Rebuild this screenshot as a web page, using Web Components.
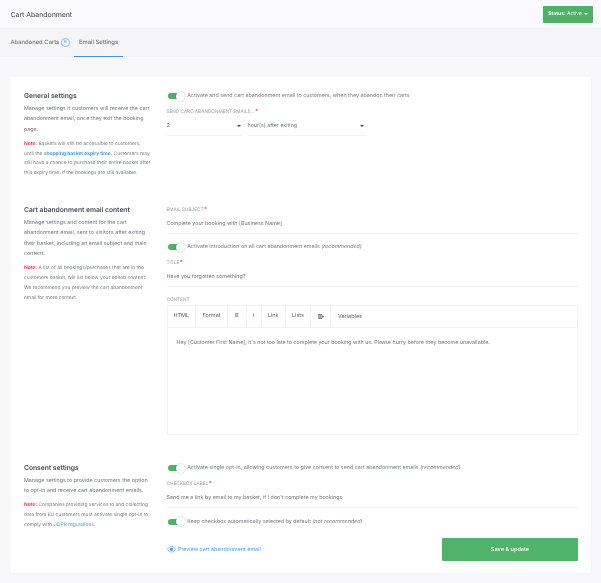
<!DOCTYPE html>
<html>
<head>
<meta charset="utf-8">
<title>Cart Abandonment</title>
<style>
    html, body { margin: 0; padding: 0; }
    html { background: #f8f8fb; }
    body {
        width: 601px;
        height: 583px;
        overflow: hidden;
        filter: blur(.3px);
        font-family: "Inter", "Open Sans", sans-serif;
        text-rendering: geometricPrecision;
        color: #6f7280;
    }
    a { color: #4a9ee8; text-decoration: none; }
    b.note { color: #ee3a57; font-weight: 700; }
    b.link { color: #2f8fe0; font-weight: 600; }
</style>
</head>
<body>
<page-header></page-header>
<page-tabs></page-tabs>
<settings-card>
    <settings-section heading="General settings" style="height:114px">
        <div slot="intro">Manage settings if customers will receive the cart<br>abandonment email, once they exit the booking<br>page.</div>
        <div slot="note"><b class="note">Note:</b> Baskets will still be accessible to customers,<br>until the <b class="link">shopping basket expiry time.</b> Customers may<br>still have a chance to purchase their entire basket after<br>this expiry time, if the bookings are still available.</div>
        <toggle-row>Activate and send cart abandonment email to customers, when they abandon their carts</toggle-row>
        <delay-select></delay-select>
    </settings-section>
    <settings-section heading="Cart abandonment email content" style="height:258px">
        <div slot="intro">Manage settings and content for the cart<br>abandonment email, sent to visitors after exiting<br>their basket, including an email subject and main<br>content.</div>
        <div slot="note"><b class="note">Note:</b> A list of all bookings/purchases that are in the<br>customers basket, will list below your edited content.<br>We recommend you preview the cart abandonment<br>email for more context.</div>
        <text-field label="EMAIL SUBJECT" required>Complete your booking with [Business Name]</text-field>
        <toggle-row style="margin-top:8.5px">Activate introduction on all cart abandonment emails <i>(recommended)</i></toggle-row>
        <text-field style="margin-top:6px" label="TITLE" required>Have you forgotten something?</text-field>
        <rich-editor>Hey [Customer First Name], it's not too late to complete your booking with us. Please hurry before they become unavailable.</rich-editor>
    </settings-section>
    <settings-section heading="Consent settings">
        <div slot="intro">Manage settings to provide customers the option<br>to opt-in and receive cart abandonment emails.</div>
        <div slot="note"><b class="note">Note:</b> Companies providing services to and collecting<br>data from EU customers must activate single opt-in to<br>comply with <a href="#">GDPR regulations</a>.</div>
        <toggle-row>Activate single opt-in, allowing customers to give consent to send cart abandonment emails <i>(recommended)</i></toggle-row>
        <text-field style="margin-top:6px" label="CHECKBOX LABEL" required>Send me a link by email to my basket, if I don't complete my bookings</text-field>
        <toggle-row style="margin-top:9px">Keep checkbox automatically selected by default <i>(not recommended)</i></toggle-row>
        <save-bar></save-bar>
    </settings-section>
</settings-card>

<script>
class PageHeader extends HTMLElement {
    constructor() {
        super();
        this.attachShadow({ mode: 'open' });
        this.shadowRoot.innerHTML = `
            <style>
                :host {
                    display: flex;
                    align-items: center;
                    justify-content: space-between;
                    height: 28px;
                    padding: 0 8px 0 10.5px;
                    background: #f9f9fb;
                    border-bottom: 1px solid #f2f2f5;
                }
                h1 { margin: 0; font-size: 6.9px; font-weight: 400; color: #3d4048; }
                .status {
                    display: flex;
                    align-items: center;
                    gap: 2px;
                    box-sizing: border-box;
                    width: 50px;
                    height: 17px;
                    justify-content: center;
                    background: #4fb168;
                    border-radius: 1px;
                    color: #fff;
                    font-size: 5px;
                }
                .status b { font-weight: 700; }
                .caret { width: 0; height: 0; border: 2.2px solid transparent; border-top: 2.4px solid #fff; border-bottom: 0; }
            </style>
            <h1>Cart Abandonment</h1>
            <div class="status"><span><b>Status:</b> Active</span><span class="caret"></span></div>
        `;
    }
}

class PageTabs extends HTMLElement {
    constructor() {
        super();
        this.attachShadow({ mode: 'open' });
        this.shadowRoot.innerHTML = `
            <style>
                :host {
                    display: flex;
                    box-sizing: border-box;
                    height: 28px;
                    padding-left: 6px;
                    background: #f5f5f7;
                    border-bottom: 1px solid #f1f1f4;
                    font-size: 5.9px;
                    color: #5c5f6a;
                }
                .tab {
                    display: flex;
                    align-items: center;
                    box-sizing: border-box;
                    height: 28px;
                    padding-bottom: 1px;
                    white-space: nowrap;
                }
                .first { width: 68px; padding-left: 4.5px; }
                .active { width: 48.5px; padding-left: 5px; border-bottom: 1.5px solid #3d92e0; }
                .count {
                    display: inline-flex;
                    align-items: center;
                    justify-content: center;
                    box-sizing: border-box;
                    width: 8.5px;
                    height: 8.5px;
                    margin-left: 2px;
                    border: .6px solid #8fc2f0;
                    border-radius: 50%;
                    color: #4a9ee8;
                    font-size: 4.4px;
                }
            </style>
            <div class="tab first">Abandoned Carts<span class="count">6</span></div>
            <div class="tab active">Email Settings</div>
        `;
    }
}

class SettingsCard extends HTMLElement {
    constructor() {
        super();
        this.attachShadow({ mode: 'open' });
        this.shadowRoot.innerHTML = `
            <style>
                :host {
                    display: block;
                    box-sizing: border-box;
                    width: 581px;
                    height: 497px;
                    margin: 20px 0 0 11px;
                    padding: 14px 13px 0;
                    background: #fff;
                    border: 1px solid #f3f3f6;
                    border-width: 0 1px 1px 0;
                }
            </style>
            <slot></slot>
        `;
    }
}

class SettingsSection extends HTMLElement {
    constructor() {
        super();
        this.attachShadow({ mode: 'open' });
        this.shadowRoot.innerHTML = `
            <style>
                :host { display: grid; grid-template-columns: 131px 1fr; column-gap: 11.5px; }
                h2 { margin: 0 0 2.5px; font-size: 6.7px; line-height: 10px; font-weight: 600; color: #484b55; }
                .intro { font-size: 5.35px; line-height: 10.6px; color: #747783; white-space: nowrap; }
                .note { margin-top: 4.4px; font-size: 4.9px; line-height: 9.9px; color: #7b7e8a; white-space: nowrap; }
                .main { min-width: 0; }
            </style>
            <div class="side">
                <h2></h2>
                <div class="intro"><slot name="intro"></slot></div>
                <div class="note"><slot name="note"></slot></div>
            </div>
            <div class="main"><slot></slot></div>
        `;
    }
    connectedCallback() {
        this.shadowRoot.querySelector('h2').textContent = this.getAttribute('heading');
    }
}

class ToggleRow extends HTMLElement {
    constructor() {
        super();
        this.attachShadow({ mode: 'open' });
        this.shadowRoot.innerHTML = `
            <style>
                :host {
                    display: flex;
                    align-items: center;
                    height: 10px;
                    padding-left: 1.7px;
                    font-size: 5.35px;
                    color: #777a86;
                    white-space: nowrap;
                }
                .switch { position: relative; flex: none; width: 16.5px; height: 6px; margin-right: 2.5px; }
                .switch::before { content: ''; position: absolute; inset: 0 3px 0 0; background: #4fb168; border-radius: 3px; }
                .knob {
                    position: absolute;
                    right: 0;
                    top: -1.5px;
                    width: 9px;
                    height: 9px;
                    background: #fff;
                    border-radius: 50%;
                    box-shadow: 0 0 2px rgba(0,0,0,.3);
                }
            </style>
            <span class="switch"><span class="knob"></span></span>
            <span><slot></slot></span>
        `;
    }
}

class TextField extends HTMLElement {
    constructor() {
        super();
        this.attachShadow({ mode: 'open' });
        this.shadowRoot.innerHTML = `
            <style>
                :host { display: block; }
                label { display: block; padding-top: .5px; font-size: 4.7px; line-height: 8px; color: #9a9ca6; }
                .req { margin-left: -.8px; color: #ee3a57; font-size: 6px; }
                .value {
                    height: 20px;
                    box-sizing: border-box;
                    padding-top: 2px;
                    display: flex;
                    align-items: center;
                    font-size: 5.35px;
                    color: #72757f;
                    border-bottom: 1px solid #f2f2f5;
                }
            </style>
            <label></label>
            <div class="value"><slot></slot></div>
        `;
    }
    connectedCallback() {
        const label = this.shadowRoot.querySelector('label');
        label.textContent = this.getAttribute('label') + ' ';
        if (this.hasAttribute('required')) {
            const star = document.createElement('span');
            star.className = 'req';
            star.textContent = '*';
            label.appendChild(star);
        }
    }
}

class DelaySelect extends HTMLElement {
    constructor() {
        super();
        this.attachShadow({ mode: 'open' });
        this.shadowRoot.innerHTML = `
            <style>
                :host { display: block; margin-top: 6px; }
                label { display: block; padding-top: 1px; font-size: 4.7px; line-height: 8px; color: #9a9ca6; }
                .req { margin-left: -.8px; color: #ee3a57; font-size: 6px; }
                .row { display: flex; gap: 4.5px; width: 199.5px; }
                .select {
                    display: flex;
                    align-items: center;
                    justify-content: space-between;
                    box-sizing: border-box;
                    height: 19.5px;
                    padding: 2px 2px 0 0;
                    font-size: 5.35px;
                    color: #72757f;
                    border-bottom: 1px solid #f2f2f5;
                }
                .num { width: 76.5px; }
                .unit { flex: 1; }
                .caret { width: 0; height: 0; border: 2.2px solid transparent; border-top: 2.4px solid #3d4048; border-bottom: 0; }
            </style>
            <label>SEND CARD ABANDONMENT EMAILS... <span class="req">*</span></label>
            <div class="row">
                <div class="select num"><span>2</span><span class="caret"></span></div>
                <div class="select unit"><span>hour(s) after exiting</span><span class="caret"></span></div>
            </div>
        `;
    }
}

class RichEditor extends HTMLElement {
    constructor() {
        super();
        this.attachShadow({ mode: 'open' });
        this.shadowRoot.innerHTML = `
            <style>
                :host { display: block; margin-top: 9.5px; }
                label { display: block; padding-top: 1px; font-size: 4.7px; line-height: 7.5px; color: #9a9ca6; }
                .box { box-sizing: border-box; height: 130px; border: 1px solid #f2f2f5; border-radius: 1px; }
                .tools { display: flex; height: 21.5px; border-bottom: 1px solid #f2f2f5; font-size: 5.5px; color: #5f626a; }
                .tools span { display: flex; align-items: center; justify-content: center; box-sizing: border-box; border-right: 1px solid #f2f2f5; }
                .tools .vars { border-right: 0; padding: 1px 0 0 7px; }
                .text { padding: 9.5px 9px; font-size: 5.35px; line-height: 10px; color: #72757f; }
                svg { display: block; }
            </style>
            <label>CONTENT</label>
            <div class="box">
                <div class="tools">
                    <span style="width:28.5px">HTML</span>
                    <span style="width:32px">Format</span>
                    <span style="width:18.5px">B</span>
                    <span style="width:15px">I</span>
                    <span style="width:24.5px">Link</span>
                    <span style="width:25px">Lists</span>
                    <span style="width:20px"><svg width="6" height="5" viewBox="0 0 6 5"><path d="M0 .4h4M0 1.8h4M0 3.2h4M0 4.6h4" stroke="#55585f" stroke-width=".8"/><path d="M4.3 1l1.7 1.5-1.7 1.5z" fill="#55585f"/></svg></span>
                    <span class="vars">Variables</span>
                </div>
                <div class="text"><slot></slot></div>
            </div>
        `;
    }
}

class SaveBar extends HTMLElement {
    constructor() {
        super();
        this.attachShadow({ mode: 'open' });
        this.shadowRoot.innerHTML = `
            <style>
                :host {
                    display: flex;
                    align-items: center;
                    justify-content: space-between;
                    margin-top: 11px;
                }
                a { display: flex; align-items: center; gap: 2.5px; padding-top: 1px; font-size: 5.35px; color: #4a9ee8; text-decoration: none; }
                button {
                    width: 136px;
                    height: 23px;
                    padding: 1px 0 0;
                    border: 0;
                    border-radius: 1px;
                    background: #51b26a;
                    color: #fff;
                    font: 500 5.6px "Inter", sans-serif;
                    text-rendering: geometricPrecision;
                }
            </style>
            <a href="#">
                <svg width="9" height="6.5" viewBox="0 0 10 7"><path d="M.4 3.5C2 1.2 3.4.4 5 .4s3 .8 4.6 3.1C8 5.8 6.6 6.6 5 6.6S2 5.8.4 3.5z" fill="none" stroke="#4a9ee8" stroke-width=".8"/><circle cx="5" cy="3.5" r="1.9" fill="#4a9ee8"/></svg>
                Preview cart abandonment email
            </a>
            <button>Save &amp; update</button>
        `;
    }
}

customElements.define('page-header', PageHeader);
customElements.define('page-tabs', PageTabs);
customElements.define('settings-card', SettingsCard);
customElements.define('settings-section', SettingsSection);
customElements.define('toggle-row', ToggleRow);
customElements.define('text-field', TextField);
customElements.define('delay-select', DelaySelect);
customElements.define('rich-editor', RichEditor);
customElements.define('save-bar', SaveBar);
</script>
</body>
</html>
